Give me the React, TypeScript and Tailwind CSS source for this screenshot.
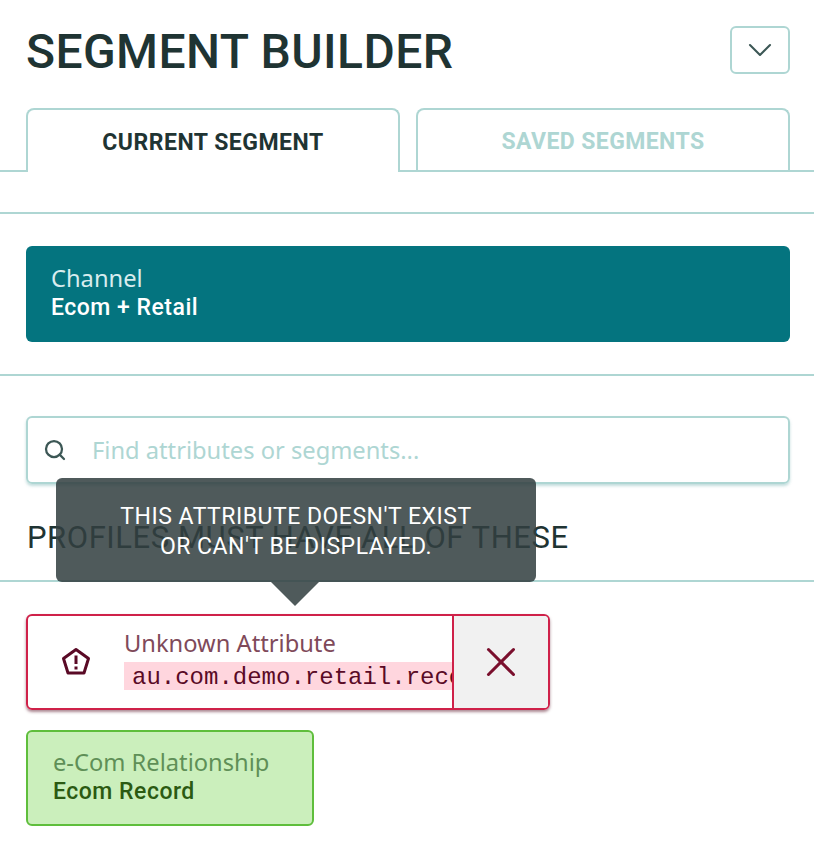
import { ChevronDown, Search, X } from 'lucide-react';

const din = "font-['Roboto',sans-serif]";
const noto = "font-['Noto_Sans',sans-serif]";

const App = () => {
  return (
    <div className="relative w-[814px] h-[868px] overflow-hidden bg-white text-[#1f3433]">
      {/* header */}
      <div className="flex items-center justify-between h-[48px] ml-[26px] mr-[24px] mt-[26px]">
        <h1 className={`${din} pt-[4px] text-[48px] leading-[48px] font-medium tracking-[0.4px] text-[#1f3433]`}>SEGMENT BUILDER</h1>
        <button className="flex items-center justify-center w-[60px] h-[48px] rounded-[6px] border-2 border-[#aed6d3] text-[#3c5755]">
          <ChevronDown size={40} strokeWidth={1.25} />
        </button>
      </div>

      {/* tabs */}
      <div className="flex gap-[16px] h-[64px] mt-[34px] pl-[26px] pr-[24px] border-b-2 border-[#aed6d3]">
        <div className={`${din} flex items-center justify-center shrink-0 w-[374px] h-[64px] pt-[5px] rounded-t-[8px] border-2 border-b-0 border-[#aed6d3] bg-white text-[23px] font-bold tracking-[0.5px] text-[#1f3433]`}>
          CURRENT SEGMENT
        </div>
        <div className={`${din} flex items-center justify-center shrink-0 w-[374px] h-[62px] pt-[5px] rounded-t-[8px] border-2 border-b-0 border-[#aed6d3] bg-white text-[23px] font-bold tracking-[0.4px] text-[#aed6d3]`}>
          SAVED SEGMENTS
        </div>
      </div>

      <div className="h-[2px] mt-[40px] bg-[#aed6d3]" />

      {/* channel */}
      <div className="flex flex-col justify-center h-[96px] ml-[26px] mr-[24px] mt-[32px] px-[25px] pb-[2px] rounded-[6px] bg-[#04747f] text-white">
        <div className={`${noto} text-[23.7px] leading-[28px] text-[#d8ecee]`}>Channel</div>
        <div className={`${din} text-[23px] leading-[31px] font-medium tracking-[0.5px]`}>Ecom + Retail</div>
      </div>

      <div className="h-[2px] mt-[32px] bg-[#aed6d3]" />

      {/* search */}
      <div className="flex items-center h-[68px] ml-[26px] mr-[24px] mt-[40px] rounded-[6px] border-2 border-[#aed6d3] shadow-[0_2px_3px_rgba(120,180,180,0.45)]">
        <Search size={24} strokeWidth={2.25} className="ml-[15px] text-[#3c5755]" />
        <span className={`${noto} ml-[25px] text-[23.7px] leading-[30px] text-[#aed6d3]`}>Find attributes or segments...</span>
      </div>

      <h2 className={`${din} ml-[27px] mt-[34px] text-[31px] leading-[40px] tracking-[0.55px] text-[#1f3433]`}>PROFILES MUST HAVE ALL OF THESE</h2>

      <div className="h-[2px] mt-[22px] bg-[#aed6d3]" />

      {/* unknown attribute */}
      <div className="flex w-[524px] h-[96px] ml-[26px] mt-[32px] rounded-[6px] border-2 border-[#cf2149] overflow-hidden shadow-[0_2px_3px_rgba(90,20,40,0.5)]">
        <div className="flex items-center justify-center w-[96px] shrink-0">
          <svg width="30" height="30" viewBox="0 0 30 30" fill="none" className="mt-[-1px]">
            <path d="M15 2.5 L27.5 11.5 L23 26 L7 26 L2.5 11.5 Z" stroke="#5a0a26" strokeWidth="3" strokeLinejoin="round" />
            <path d="M15 8.5 V17" stroke="#5a0a26" strokeWidth="3" />
            <path d="M15 19.5 V22.5" stroke="#5a0a26" strokeWidth="3" />
          </svg>
        </div>
        <div className="flex flex-col pt-[12px] min-w-0 flex-1 overflow-hidden">
          <div className={`${noto} text-[23.7px] leading-[30px] text-[#7f4a5a]`}>Unknown Attribute</div>
          <div className="font-['Liberation_Mono',monospace] w-max mt-[4px] pt-[3px] px-[8px] text-[24px] leading-[25px] whitespace-nowrap bg-[#ffd6de] text-[#5a0a26]">
            au.com.demo.retail.record
          </div>
        </div>
        <div className="flex items-center justify-center w-[96px] shrink-0 border-l-2 border-[#cf2149] bg-[#f1f1f1] text-[#7a0f2d]">
          <X size={50} strokeWidth={1.45} />
        </div>
      </div>

      {/* relationship */}
      <div className="flex flex-col justify-center w-[288px] h-[96px] ml-[26px] mt-[20px] px-[25px] pb-[1px] rounded-[6px] border-2 border-[#5fbe3c] bg-[#cbefbc]">
        <div className={`${noto} text-[23.7px] leading-[28px] text-[#5f8f57]`}>e-Com Relationship</div>
        <div className={`${din} text-[23px] leading-[31px] font-medium tracking-[0.5px] text-[#2b5a12]`}>Ecom Record</div>
      </div>

      {/* tooltip */}
      <div className="absolute left-[56px] top-[478px] w-[480px] h-[104px]">
        <div className={`${din} flex flex-col items-center justify-center h-full pt-[4px] rounded-[6px] bg-[#323f40]/[0.86] text-[23px] leading-[30px] tracking-[0.5px] text-white`}>
          <div>THIS ATTRIBUTE DOESN'T EXIST</div>
          <div>OR CAN'T BE DISPLAYED.</div>
        </div>
        <div className="absolute left-[215px] top-[104px] w-0 h-0 border-x-[24px] border-t-[24px] border-x-transparent border-t-[#4f5a5b]" />
      </div>
    </div>
  );
};

export default App;
